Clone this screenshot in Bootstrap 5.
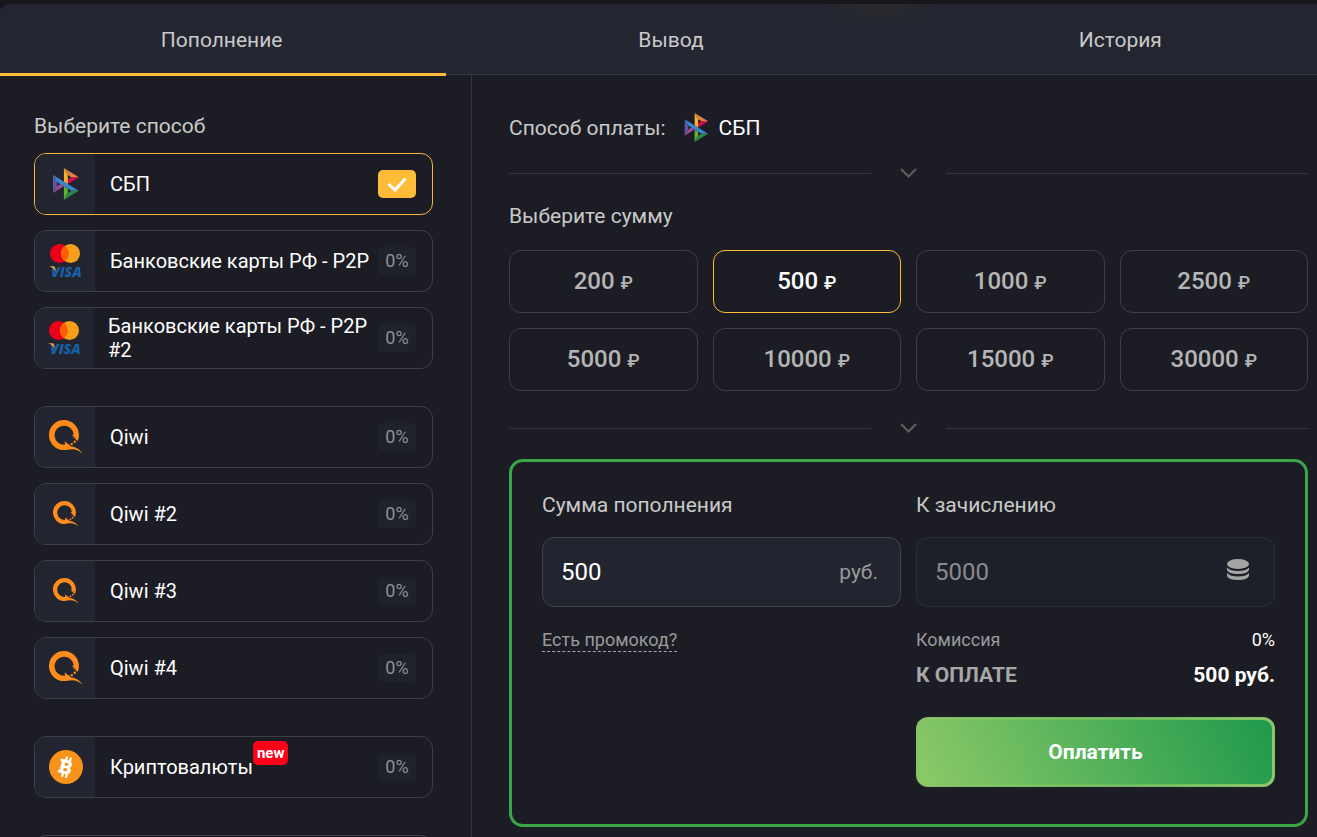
<!DOCTYPE html>
<html lang="ru">
<head>
<meta charset="utf-8">
<meta name="viewport" content="width=device-width, initial-scale=1">
<title>Пополнение</title>
<link href="https://cdn.jsdelivr.net/npm/bootstrap@5.3.0/dist/css/bootstrap.min.css" rel="stylesheet">
<style>
:root { --line: #3f4046; --panel: #22252f; --accent: #ffbc38; --text: #c9c9c9; --muted: #999a9c; }
body { background: #17171b; color: var(--text); font-family: Roboto, "Liberation Sans", sans-serif; font-size: 20px; line-height: 24px; height: 100vh; overflow: hidden; }
button, input { font-family: inherit; }
.cashier { margin: 4px -28px 0 -3px; background: #1c1d24; border-radius: 15px 15px 0 0; }
.cashier-tabs { background: radial-gradient(ellipse 60px 24px at 883px 0, #2a2b2d, #232530); border-radius: 15px 15px 0 0; border-bottom: 1px solid #37383f; height: 71px; }
.cashier-tab { flex: 1 1 0; border: 0; background: none; color: var(--text); font-size: 21px; padding: 0 0 1px; height: 72px; position: relative; }
.cashier-tab.active { border-bottom: 3px solid var(--accent); padding-top: 3px; }
.methods { flex: 0 0 475px; padding: 39px 38px 0 37px; border-right: 1px solid #32333a; }
.section-title { font-size: 21px; line-height: 24px; margin: 0; font-weight: 400; }
.methods .section-title { margin-bottom: 15px; }
.group { display: grid; gap: 15px; margin-bottom: 37px; }
.method { height: 62px; border: 1px solid var(--line); border-radius: 12px; overflow: hidden; cursor: pointer; color: #fff; padding-right: 16px; }
.method-icon { flex: 0 1 60px; min-width: 58px; padding-left: 2px; background: var(--panel); }
.method-name { margin: 0 8px 0 15px; flex: 1 1 auto; }
.rate { flex: none; width: 38px; height: 28px; border-radius: 5px; background: #1f222b; color: #8f8f91; font-size: 18px; line-height: 27px; text-align: center; }
.tick { display: none; background: var(--accent); }
.method:has(input:checked) { border-color: #fbb33c; }
.method:has(input:checked) .tick { display: flex; }
.method:has(input:checked) .percent { display: none; }
.new-tag { background: #fb0018; color: #fff; font-size: 15px; font-weight: 700; line-height: 24px; border-radius: 5px; padding: 0 4px; position: absolute; left: 100%; bottom: 14px; }
.payment { padding: 38px 37px 0; min-width: 0; }
.chosen { gap: 10px; margin-bottom: 24px; }
.chosen svg { margin-left: 8px; }
.step { gap: 75px; height: 14px; }
.step::before, .step::after { content: ""; flex: 1; border-top: 1px solid #35363c; }
.step svg { margin: 0 -46px; }
.amounts { display: grid; grid-template-columns: repeat(4, 1fr); gap: 15px; margin: 22px 0 30px; }
.amount { height: 63px; border: 1px solid var(--line); border-radius: 12px; background: none; color: #b5b5b6; font-size: 24px; font-weight: 500; }
.amount small { font-size: 18px; }
.amount.active { border-color: var(--accent); color: #fff; }
.summary { border: 3px solid #3aa648; border-radius: 14px; padding: 31px 30px 37px; margin-top: 24px; }
.summary label { margin-bottom: 20px; }
.halves { display: grid; grid-template-columns: repeat(2, minmax(0, 1fr)); gap: 15px; }
.sum-box { height: 70px; border: 1px solid #42434a; border-radius: 12px; background: var(--panel); padding: 0 22px 0 18px; }
.sum-box input { background: none; border: 0; outline: 0; color: #fff; font-size: 24px; min-width: 0; flex: 1; padding: 0; }
.sum-box .unit { color: var(--muted); }
.sum-box.locked { background: #1e2029; border-color: #2b2d35; padding-right: 24px; }
.sum-box.locked input { color: #8a8a8e; }
.promo { font-size: 18px; line-height: 22px; color: var(--muted); text-decoration: none; border-bottom: 1px dashed #a5a5a6; display: inline-block; margin-top: 22px; }
.fee { font-size: 18px; color: var(--muted); margin-top: 21px; }
.total { font-size: 21px; font-weight: 700; color: #a7a7a8; margin: 11px 0 30px; }
.pay { height: 70px; border: 3px solid transparent; border-radius: 12px; color: #fff; font-size: 21px; font-weight: 700; background: linear-gradient(65deg, #8dc968, #55b25a 50%, #20994c) padding-box, linear-gradient(90deg, #87c666, #6dbb60 60%, #8cc76a) border-box; }
</style>
</head>
<body>
<svg width="0" height="0" class="d-none" aria-hidden="true">
  <symbol id="sbp" viewBox="0 0 98 120">
    <path fill="#5b57a2" d="M0 26.1 14.5 52.1V67.9L0 93.9z"/>
    <path fill="#d90751" d="M55.8 42.6 69.4 34.3H97.3L55.8 59.7z"/>
    <path fill="#f5b030" d="M55.7 26 55.8 60.4 41.2 51.4V0z"/>
    <path fill="#e08045" d="M97.3 34.3H69.4L55.7 26 41.2 0z"/>
    <path fill="#63b22f" d="M55.8 94V77.9L41.2 69.2V120z"/>
    <path fill="#3a86cc" d="M69.4 85.7 14.5 52.1 0 26.1 97.2 85.7z"/>
    <path fill="#2d8744" d="M41.2 120 55.8 94 69.4 85.7H97.2z"/>
    <path fill="#984995" d="M0 93.9 41.4 68.5 27.5 60 14.5 67.9z"/>
  </symbol>
  <symbol id="cards" viewBox="0 0 34 34">
    <circle cx="10.5" cy="9.5" r="9.5" fill="#eb001b"/><circle cx="21.5" cy="9.5" r="9.5" fill="#f79e1b"/>
    <path fill="#ff5f00" d="M16 1.8a9.5 9.5 0 0 1 0 15.4 9.5 9.5 0 0 1 0-15.4z"/>
    <text x="2" y="33" font-family="Open Sans, sans-serif" font-weight="800" font-style="italic" font-size="14" fill="#1760a5">VISA</text>
    <path fill="#e9a13a" d="M0 22.3h4.4q1.3 0 1.7 1.4l1.2 4.8Q5.4 24 0 22.3z"/>
  </symbol>
  <symbol id="qiwi" viewBox="0 0 34 34">
    <path fill="#ff8c1a" fill-rule="evenodd" d="M15 0a15 15 0 0 1 14.900 15c0 2.400-.5 4.500-1.400 6.300-.4-1.100-1.200-1.700-2.400-2.100l.6-1.700-3 .4 1.700-1.900-3-.5 2.300-1A9.600 9.600 0 1 0 16 24.800l-.3-3.600 3.500 3.100 1.500.2.400 1.400c2.300.6 4.600.9 6.900 2.300 2.200 1.200 3.900 2.900 5.100 5.200-3.500-3.200-6-4-9.900-4.200-3.300-.1-5 .9-8.200.9A15 15 0 0 1 15 0z"/>
    <circle cx="22.800" cy="24.100" r="1.200" fill="#ff8c1a"/><circle cx="25.700" cy="21.800" r="1.200" fill="#ff8c1a"/>
  </symbol>
  <symbol id="btc" viewBox="0 0 34 34">
    <circle cx="17" cy="17" r="17" fill="#f7931a"/>
    <g transform="rotate(14 17 17)"><path d="M15.500 6.500v4.500M19.500 6.500v4.500M15.500 23v4.500M19.500 23v4.500M10 11.200h4M10 22.800h4" stroke="#fff" stroke-width="2.200"/>
    <text x="10.800" y="24" font-family="Roboto, sans-serif" font-weight="900" font-size="19.500" fill="#fff">B</text></g>
  </symbol>
</svg>

<main class="cashier">
  <nav class="cashier-tabs d-flex">
    <button type="button" class="cashier-tab active">Пополнение</button>
    <button type="button" class="cashier-tab">Вывод</button>
    <button type="button" class="cashier-tab">История</button>
  </nav>
  <div class="d-flex">
    <section class="methods">
      <h2 class="section-title">Выберите способ</h2>
      <div class="group">
        <label class="method d-flex align-items-center"><input class="visually-hidden" type="radio" name="method" checked>
          <span class="method-icon h-100 d-flex align-items-center justify-content-center"><svg width="26" height="32"><use href="#sbp"/></svg></span>
          <span class="method-name">СБП</span><span class="rate percent">0%</span>
          <span class="rate tick align-items-center justify-content-center"><svg width="20" height="15" viewBox="0 0 20 15" fill="none" stroke="#fff" stroke-width="3"><path d="M1.500 7 8 13 18.500 1.500"/></svg></span></label>
        <label class="method d-flex align-items-center"><input class="visually-hidden" type="radio" name="method">
          <span class="method-icon h-100 d-flex align-items-center justify-content-center"><svg width="34" height="34"><use href="#cards"/></svg></span>
          <span class="method-name">Банковские карты РФ - P2P</span><span class="rate percent">0%</span></label>
        <label class="method d-flex align-items-center"><input class="visually-hidden" type="radio" name="method">
          <span class="method-icon h-100 d-flex align-items-center justify-content-center"><svg width="34" height="34"><use href="#cards"/></svg></span>
          <span class="method-name">Банковские карты РФ - P2P #2</span><span class="rate percent">0%</span></label>
      </div>
      <div class="group">
        <label class="method d-flex align-items-center"><input class="visually-hidden" type="radio" name="method">
          <span class="method-icon h-100 d-flex align-items-center justify-content-center"><svg width="34" height="34"><use href="#qiwi"/></svg></span>
          <span class="method-name">Qiwi</span><span class="rate percent">0%</span></label>
        <label class="method d-flex align-items-center"><input class="visually-hidden" type="radio" name="method">
          <span class="method-icon h-100 d-flex align-items-center justify-content-center"><svg width="26" height="26"><use href="#qiwi"/></svg></span>
          <span class="method-name">Qiwi #2</span><span class="rate percent">0%</span></label>
        <label class="method d-flex align-items-center"><input class="visually-hidden" type="radio" name="method">
          <span class="method-icon h-100 d-flex align-items-center justify-content-center"><svg width="26" height="26"><use href="#qiwi"/></svg></span>
          <span class="method-name">Qiwi #3</span><span class="rate percent">0%</span></label>
        <label class="method d-flex align-items-center"><input class="visually-hidden" type="radio" name="method">
          <span class="method-icon h-100 d-flex align-items-center justify-content-center"><svg width="34" height="34"><use href="#qiwi"/></svg></span>
          <span class="method-name">Qiwi #4</span><span class="rate percent">0%</span></label>
      </div>
      <div class="group">
        <label class="method d-flex align-items-center"><input class="visually-hidden" type="radio" name="method">
          <span class="method-icon h-100 d-flex align-items-center justify-content-center"><svg width="34" height="34"><use href="#btc"/></svg></span>
          <span class="method-name"><span class="position-relative">Криптовалюты<span class="new-tag">new</span></span></span><span class="rate percent">0%</span></label>
      </div>
      <div class="group">
        <label class="method d-flex align-items-center"><input class="visually-hidden" type="radio" name="method" aria-label="Другой способ"></label>
      </div>
    </section>

    <section class="payment flex-grow-1">
      <div class="chosen d-flex align-items-center"><span class="section-title">Способ оплаты:</span><svg width="25" height="29"><use href="#sbp"/></svg><span class="section-title text-white">СБП</span></div>
      <div class="step d-flex align-items-center"><svg width="17" height="10" viewBox="0 0 17 10" fill="none" stroke="#5e5f60" stroke-width="2"><path d="m1 1 7.500 7.500L16 1"/></svg></div>
      <h2 class="section-title mt-4">Выберите сумму</h2>
      <div class="amounts">
        <button type="button" class="amount">200 <small>₽</small></button>
        <button type="button" class="amount active">500 <small>₽</small></button>
        <button type="button" class="amount">1000 <small>₽</small></button>
        <button type="button" class="amount">2500 <small>₽</small></button>
        <button type="button" class="amount">5000 <small>₽</small></button>
        <button type="button" class="amount">10000 <small>₽</small></button>
        <button type="button" class="amount">15000 <small>₽</small></button>
        <button type="button" class="amount">30000 <small>₽</small></button>
      </div>
      <div class="step d-flex align-items-center"><svg width="17" height="10" viewBox="0 0 17 10" fill="none" stroke="#5e5f60" stroke-width="2"><path d="m1 1 7.500 7.500L16 1"/></svg></div>
      <form class="summary halves">
        <div>
          <label class="section-title d-block" for="sum">Сумма пополнения</label>
          <div class="sum-box d-flex align-items-center"><input id="sum" type="text" value="500"><span class="section-title unit">руб.</span></div>
          <a class="promo" href="#">Есть промокод?</a>
        </div>
        <div>
          <label class="section-title d-block" for="credit">К зачислению</label>
          <div class="sum-box locked d-flex align-items-center"><input id="credit" type="text" value="5000" readonly>
            <svg class="mb-1" width="24" height="22" viewBox="0 0 24 22" fill="#a5a5a5"><ellipse cx="12" cy="5" rx="11" ry="5"/><path d="M1 8.500q3 3.500 11 3.500t11-3.500v2.500q-1.500 4-11 4T1 11zM1 14q3 3.500 11 3.500T23 14v3q-1.500 4-11 4T1 17z"/></svg></div>
          <div class="fee d-flex justify-content-between"><span>Комиссия</span><span class="text-white">0%</span></div>
          <div class="total d-flex justify-content-between"><span>К ОПЛАТЕ</span><span class="text-white">500 руб.</span></div>
          <button type="button" class="pay w-100">Оплатить</button>
        </div>
      </form>
    </section>
  </div>
</main>
<script src="https://cdn.jsdelivr.net/npm/bootstrap@5.3.0/dist/js/bootstrap.bundle.min.js"></script>
</body>
</html>
